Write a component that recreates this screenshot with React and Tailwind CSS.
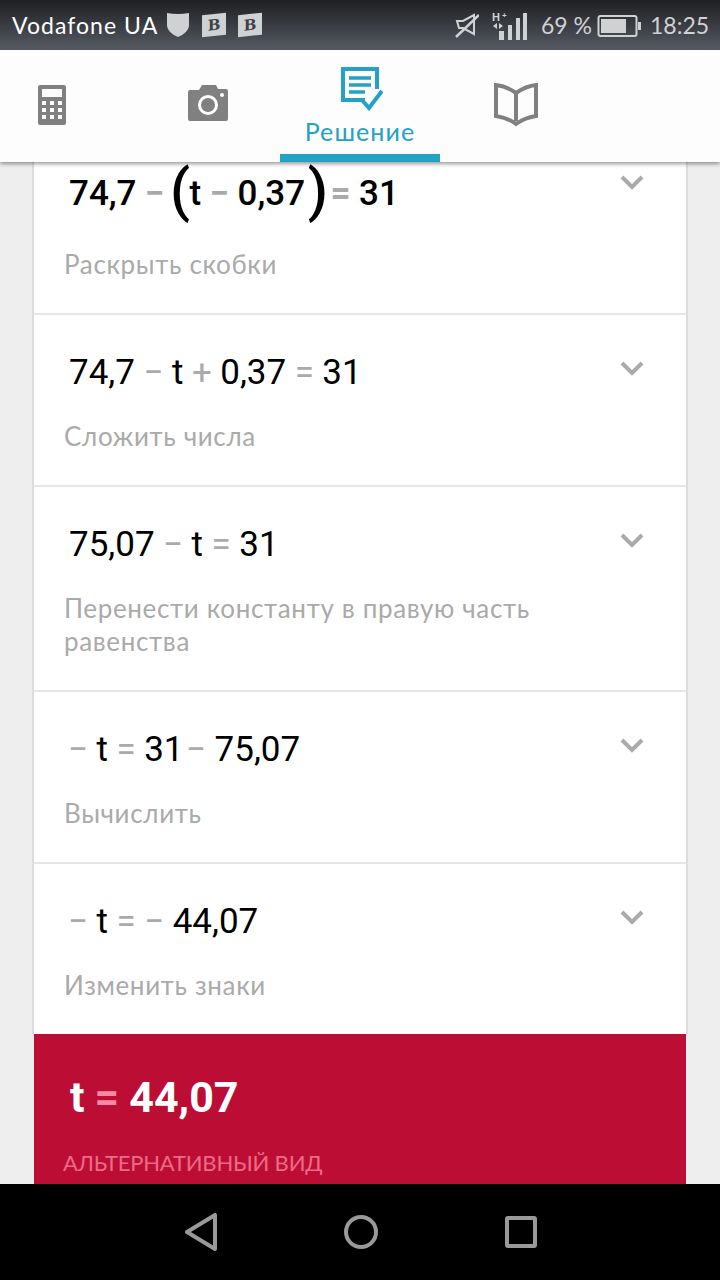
const hand = "font-['Lato','Noto_Sans',sans-serif]";

function Op({ children, bold, className = "" }) {
  return <span className={"text-[#aaaaaa] " + (bold ? "font-bold " : "") + className}>{children}</span>;
}

function Chevron() {
  return (
    <svg width="24" height="15" viewBox="0 0 24 15" className="shrink-0">
      <polyline points="2,2 12,12 22,2" fill="none" stroke="#aaaaaa" strokeWidth="4" />
    </svg>
  );
}

function Row({ eq, label, eqH = "h-[46px]", last, minus }) {
  return (
    <div className={"bg-white border-x-2 border-[#dcdcdc] pt-[34px] pb-[32px] pl-[30px] pr-[42px] flex justify-between items-start " + (last ? "" : "border-b-2 border-b-[#e6e6e6]")}>
      <div className="flex flex-col">
        <div className={"flex items-center gap-[8.5px] pt-[3px] text-[35px] text-black font-['Roboto',sans-serif] whitespace-nowrap " + (minus ? "ml-[4px] " : "ml-[5px] ") + eqH}>
          {eq}
        </div>
        <div className={"mt-[25px] text-[26px] leading-[33px] tracking-[0.65px] text-[#aaaaaa] " + hand}>{label}</div>
      </div>
      <div className="mt-[12px]"><Chevron /></div>
    </div>
  );
}

function StatusBar() {
  return (
    <div className="h-[50px] bg-gradient-to-b from-[#1f2023] to-[#565b63] flex items-center pl-[12px] shrink-0 whitespace-nowrap">
      <span className={"w-[147px] shrink-0 text-[23px] leading-none text-white tracking-[1.05px] " + hand}>Vodafone UA</span>
      <svg width="22" height="24" viewBox="0 0 22 24" className="ml-[8px] shrink-0">
        <path d="M0 0 Q11 2 22 0 V13 Q21 20 11 24 Q1 20 0 13Z" fill="#cfd1d3" />
      </svg>
      <span className="ml-[13px] shrink-0 w-[24px] h-[22px] bg-[#cfd1d3] -skew-y-6 flex items-center justify-center text-[15px] font-black text-[#3c3f44] font-['DejaVu_Serif',serif] leading-none">B</span>
      <span className="ml-[12px] shrink-0 w-[24px] h-[22px] bg-[#cfd1d3] -skew-y-6 flex items-center justify-center text-[15px] font-black text-[#3c3f44] font-['DejaVu_Serif',serif] leading-none">B</span>
      <svg width="24" height="26" viewBox="0 0 24 26" className="ml-[193px] shrink-0">
        <path d="M2 9 H8 L19 3 V22 L8 16 H4 Z" fill="none" stroke="#cfd1d3" strokeWidth="2" />
        <path d="M1 25 L24 3" stroke="#cfd1d3" strokeWidth="2.5" />
      </svg>
      <svg width="36" height="30" viewBox="0 0 36 30" className="ml-[13px] shrink-0">
        <text x="0" y="11" fontSize="11" fontWeight="700" fill="#cfd1d3" fontFamily="Liberation Sans">H</text>
        <text x="10" y="8" fontSize="8" fontWeight="700" fill="#cfd1d3" fontFamily="Liberation Sans">+</text>
        <path d="M5 13 V19 L1 16Z M7 13 V19 L11 16Z" fill="#cfd1d3" />
        <rect x="7" y="21" width="5" height="9" fill="#cfd1d3" />
        <rect x="16" y="15" width="4" height="15" fill="#cfd1d3" />
        <rect x="24" y="8" width="4" height="22" fill="#cfd1d3" />
        <rect x="31" y="3" width="4" height="27" fill="#cfd1d3" />
      </svg>
      <span className={"ml-[13px] w-[52px] shrink-0 text-[23px] leading-none text-[#cfd1d3] " + hand}>69 %</span>
      <svg width="45" height="24" viewBox="0 0 45 24" className="ml-[4px] shrink-0">
        <rect x="1.5" y="3" width="38" height="20" rx="2" fill="none" stroke="#cfd1d3" strokeWidth="2" />
        <rect x="4" y="6" width="25" height="14" fill="#cfd1d3" />
        <rect x="41" y="9" width="3" height="8" fill="#cfd1d3" />
      </svg>
      <span className={"ml-[8px] shrink-0 text-[23px] leading-none text-[#cfd1d3] " + hand}>18:25</span>
    </div>
  );
}

function TabBar() {
  return (
    <div className="relative z-10 h-[112px] bg-[#fdfdfd] shadow-[0_2px_4px_rgba(0,0,0,0.4)] flex items-start shrink-0">
      <svg width="28" height="40" viewBox="0 0 28 40" className="ml-[38px] mt-[35px]">
        <rect width="28" height="40" rx="2" fill="#808080" />
        <rect x="4" y="4" width="20" height="8" fill="#fdfdfd" />
        {[16, 23, 30].map((y) =>
          [4, 12, 20].map((x) => <rect key={x + "-" + y} x={x} y={y} width="4" height="4" fill="#fdfdfd" />)
        )}
      </svg>
      <svg width="40" height="36" viewBox="0 0 40 36" className="ml-[122px] mt-[35px]">
        <path d="M2 5 H11 L14 0 H28 L30 4 H38 Q40 4 40 6 V34 Q40 36 38 36 H2 Q0 36 0 34 V7 Q0 5 2 5Z" fill="#808080" />
        <circle cx="20" cy="20" r="8.5" fill="none" stroke="#fdfdfd" strokeWidth="3" />
        <circle cx="34" cy="10" r="2" fill="#fdfdfd" />
      </svg>
      <div className="ml-[52px] w-[160px] h-[112px] flex flex-col items-center">
        <svg width="42" height="44" viewBox="0 0 42 44" className="mt-[17px] ml-[4px]">
          <path d="M24 33 H2 V2 H36 V22" fill="none" stroke="#23a2c6" strokeWidth="4" />
          <path d="M8 11 H30 M8 18 H30 M8 25 H24" stroke="#23a2c6" strokeWidth="3.5" />
          <path d="M20 32 L28 41 L41 24" fill="none" stroke="#23a2c6" strokeWidth="4" />
        </svg>
        <span className={"mt-[5px] text-[25px] leading-[30px] tracking-[1.1px] text-[#23a2c6] " + hand}>Решение</span>
        <div className="mt-auto h-[8px] w-full bg-[#23a2c6]" />
      </div>
      <svg width="44" height="44" viewBox="0 0 44 44" className="ml-[54px] mt-[33px]">
        <path d="M22 10 Q12 3 2 2 V33 Q14 35 22 41 Q30 35 42 33 V2 Q32 3 22 10 V38" fill="none" stroke="#808080" strokeWidth="4" />
      </svg>
    </div>
  );
}

function NavBar() {
  return (
    <div className="h-[96px] bg-black shrink-0 flex items-center relative z-10">
      <svg width="32" height="38" viewBox="0 0 32 38" className="ml-[185px]">
        <path d="M30 2 V36 L2 19Z" fill="none" stroke="#999999" strokeWidth="4" strokeLinejoin="round" />
      </svg>
      <svg width="34" height="34" viewBox="0 0 34 34" className="ml-[127px]">
        <circle cx="17" cy="17" r="15" fill="none" stroke="#999999" strokeWidth="4" />
      </svg>
      <svg width="32" height="32" viewBox="0 0 32 32" className="ml-[127px]">
        <rect x="2" y="2" width="28" height="28" rx="1" fill="none" stroke="#999999" strokeWidth="4" />
      </svg>
    </div>
  );
}

export default function App() {
  return (
    <div className="w-[720px] h-[1280px] flex flex-col overflow-hidden bg-[#eeeeee]">
      <StatusBar />
      <TabBar />
      <div className="flex-1 overflow-hidden">
        <div className="ml-[32px] w-[656px] -mt-[33px]">
          <Row
            eqH="h-[60px]"
            label="Раскрыть скобки"
            eq={
              <span className="contents font-medium">
                <span>74,7</span>
                <Op bold>−</Op>
                <span className="text-[58px] leading-[50px] font-medium -ml-[3px] -mr-[9px] -mt-[10px]">(</span>
                <span>t</span>
                <Op bold>−</Op>
                <span>0,37</span>
                <span className="text-[58px] leading-[50px] font-medium -ml-[6px] -mr-[6px] -mt-[10px]">)</span>
                <Op bold>=</Op>
                <span>31</span>
              </span>
            }
          />
          <Row label="Сложить числа" eq={<><span>74,7</span><Op>−</Op><span>t</span><Op>+</Op><span>0,37</span><Op>=</Op><span>31</span></>} />
          <Row
            label={<>Перенести константу в правую часть<br />равенства</>}
            eq={<><span>75,07</span><Op>−</Op><span>t</span><Op>=</Op><span>31</span></>}
          />
          <Row minus label="Вычислить" eq={<><Op>−</Op><span>t</span><Op>=</Op><span>31</span><Op className="-ml-[6px]">−</Op><span>75,07</span></>} />
          <Row minus last label="Изменить знаки" eq={<><Op>−</Op><span>t</span><Op>=</Op><Op>−</Op><span>44,07</span></>} />
          <div className="bg-[#bc0e34] mx-[2px] h-[160px] pt-[40px] pl-[29px]">
            <div className="ml-[7px] h-[46px] flex items-center gap-[10px] text-[43px] font-bold text-white font-['Roboto',sans-serif]">
              <span>t</span><span className="text-[#f28aa2]">=</span><span>44,07</span>
            </div>
            <div className={"mt-[26px] text-[22px] leading-[33px] tracking-[-0.2px] text-[#ee6a88] " + hand}>АЛЬТЕРНАТИВНЫЙ ВИД</div>
          </div>
        </div>
      </div>
      <NavBar />
    </div>
  );
}
